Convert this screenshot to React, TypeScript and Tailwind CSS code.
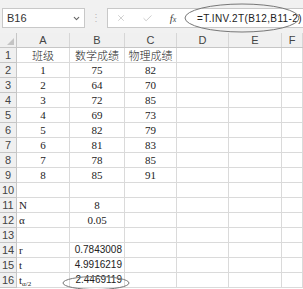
import { ChevronDown, X, Check } from 'lucide-react';

type Align = 'center' | 'left' | 'right';
type Font = 'serif' | 'sans' | 'cjk';

interface Cell {
  text: React.ReactNode;
  align: Align;
  font: Font;
}

const columns = ['A', 'B', 'C', 'D', 'E', 'F'];

const c = (text: React.ReactNode, font: Font = 'serif', align: Align = 'center'): Cell => ({ text, font, align });

const data: (Cell | null)[][] = [
  [c('班级', 'cjk'), c('数学成绩', 'cjk'), c('物理成绩', 'cjk')],
  [c('1'), c('75'), c('82')],
  [c('2'), c('64'), c('70')],
  [c('3'), c('72'), c('85')],
  [c('4'), c('69'), c('73')],
  [c('5'), c('82'), c('79')],
  [c('6'), c('81'), c('83')],
  [c('7'), c('78'), c('85')],
  [c('8'), c('85'), c('91')],
  [],
  [c('N', 'serif', 'left'), c('8')],
  [c('α', 'serif', 'left'), c('0.05')],
  [],
  [c('r', 'serif', 'left'), c('0.7843008', 'sans', 'right')],
  [c('t', 'serif', 'left'), c('4.9916219', 'sans', 'right')],
  [
    c(
      <span className="flex items-end">
        t<span className="text-[7px] leading-none relative top-[2px]">α/2</span>
      </span>,
      'serif',
      'left'
    ),
    c('2.4469119', 'sans', 'right'),
  ],
];

const fontClass: Record<Font, string> = {
  serif: "font-['Liberation_Serif',serif] text-[11px]",
  sans: "font-['Liberation_Sans',sans-serif] text-[10px]",
  cjk: "font-['Noto_Sans_CJK_SC',sans-serif] text-[11px] font-light",
};

const alignClass: Record<Align, string> = {
  center: 'justify-center',
  left: 'justify-start pl-[2px]',
  right: 'justify-end pr-[2px]',
};

const gridCols = 'grid grid-cols-[17px_53px_55px_52px_52px_53px_1fr]';

const App = () => {
  return (
    <div className="relative w-[303px] h-[289px] overflow-hidden bg-white text-[#222]">
      {/* formula bar */}
      <div className="flex items-start h-[33px] pt-[8px] bg-[#f1f1f1] font-['Liberation_Sans',sans-serif]">
        <div className="ml-[2px] w-[83px] h-[20px] bg-white border border-[#c8c8c8] flex items-center justify-between pl-[4px] pr-[3px]">
          <span className="text-[11px] text-[#333]">B16</span>
          <ChevronDown className="w-[9px] h-[9px] text-[#666]" strokeWidth={3} />
        </div>
        <div className="w-[22px] h-[20px] flex items-center justify-center text-[10px] text-[#bbb] leading-none">⋮</div>
        <div className="flex-1 h-[20px] bg-white border-y border-l border-[#c8c8c8] flex items-center">
          <div className="w-[26px] flex justify-center">
            <X className="w-[10px] h-[10px] text-[#b5b5b5]" strokeWidth={1.5} />
          </div>
          <div className="w-[26px] flex justify-center">
            <Check className="w-[11px] h-[11px] text-[#b5b5b5]" strokeWidth={1.5} />
          </div>
          <div className="w-[26px] flex justify-center font-['Liberation_Serif',serif] italic text-[11px] text-[#444]">
            f<span className="text-[8px] self-end">x</span>
          </div>
          <span className="ml-[11px] text-[10px] tracking-[0.4px] text-[#222] whitespace-nowrap">=T.INV.2T(B12,B11-2)</span>
        </div>
      </div>

      {/* column header */}
      <div className={`${gridCols} h-[15px] bg-[#f0f0f0] border-b border-[#c6c6c6] font-['Liberation_Sans',sans-serif] text-[11px] text-[#444]`}>
        <div className="relative border-r border-[#c6c6c6]">
          <svg className="absolute right-[2px] bottom-[2px]" width="7" height="7" viewBox="0 0 7 7">
            <polygon points="7,0 7,7 0,7" fill="#c4c4c4" />
          </svg>
        </div>
        {columns.map((col) => (
          <div key={col} className="flex items-center justify-center border-r border-[#d6d6d6] leading-none">
            {col}
          </div>
        ))}
      </div>

      {/* rows */}
      {Array.from({ length: 16 }, (_, i) => {
        const row = data[i] ?? [];
        return (
          <div key={i} className={`${gridCols} h-[15px]`}>
            <div className="flex items-center justify-center bg-[#f0f0f0] border-r border-b border-[#c6c6c6] font-['Liberation_Sans',sans-serif] text-[11px] text-[#444] leading-none">
              {i + 1}
            </div>
            {columns.map((col, j) => {
              const cell = row[j];
              return (
                <div
                  key={col}
                  className={`flex items-center overflow-visible whitespace-nowrap leading-none border-r border-b border-[#dadada] ${
                    cell ? `${fontClass[cell.font]} ${alignClass[cell.align]}` : ''
                  }`}
                >
                  {cell?.text}
                </div>
              );
            })}
          </div>
        );
      })}

      {/* hand-drawn ellipses */}
      <svg className="absolute left-[184px] top-[3px]" width="116" height="30" viewBox="0 0 116 30">
        <ellipse cx="58" cy="15" rx="57" ry="14" fill="none" stroke="#777" strokeWidth="1" />
      </svg>
      <svg className="absolute left-[62px] top-[275px]" width="68" height="15" viewBox="0 0 68 15">
        <ellipse cx="34" cy="8" rx="33" ry="6.5" fill="none" stroke="#777" strokeWidth="1" />
      </svg>
    </div>
  );
};

export default App;
